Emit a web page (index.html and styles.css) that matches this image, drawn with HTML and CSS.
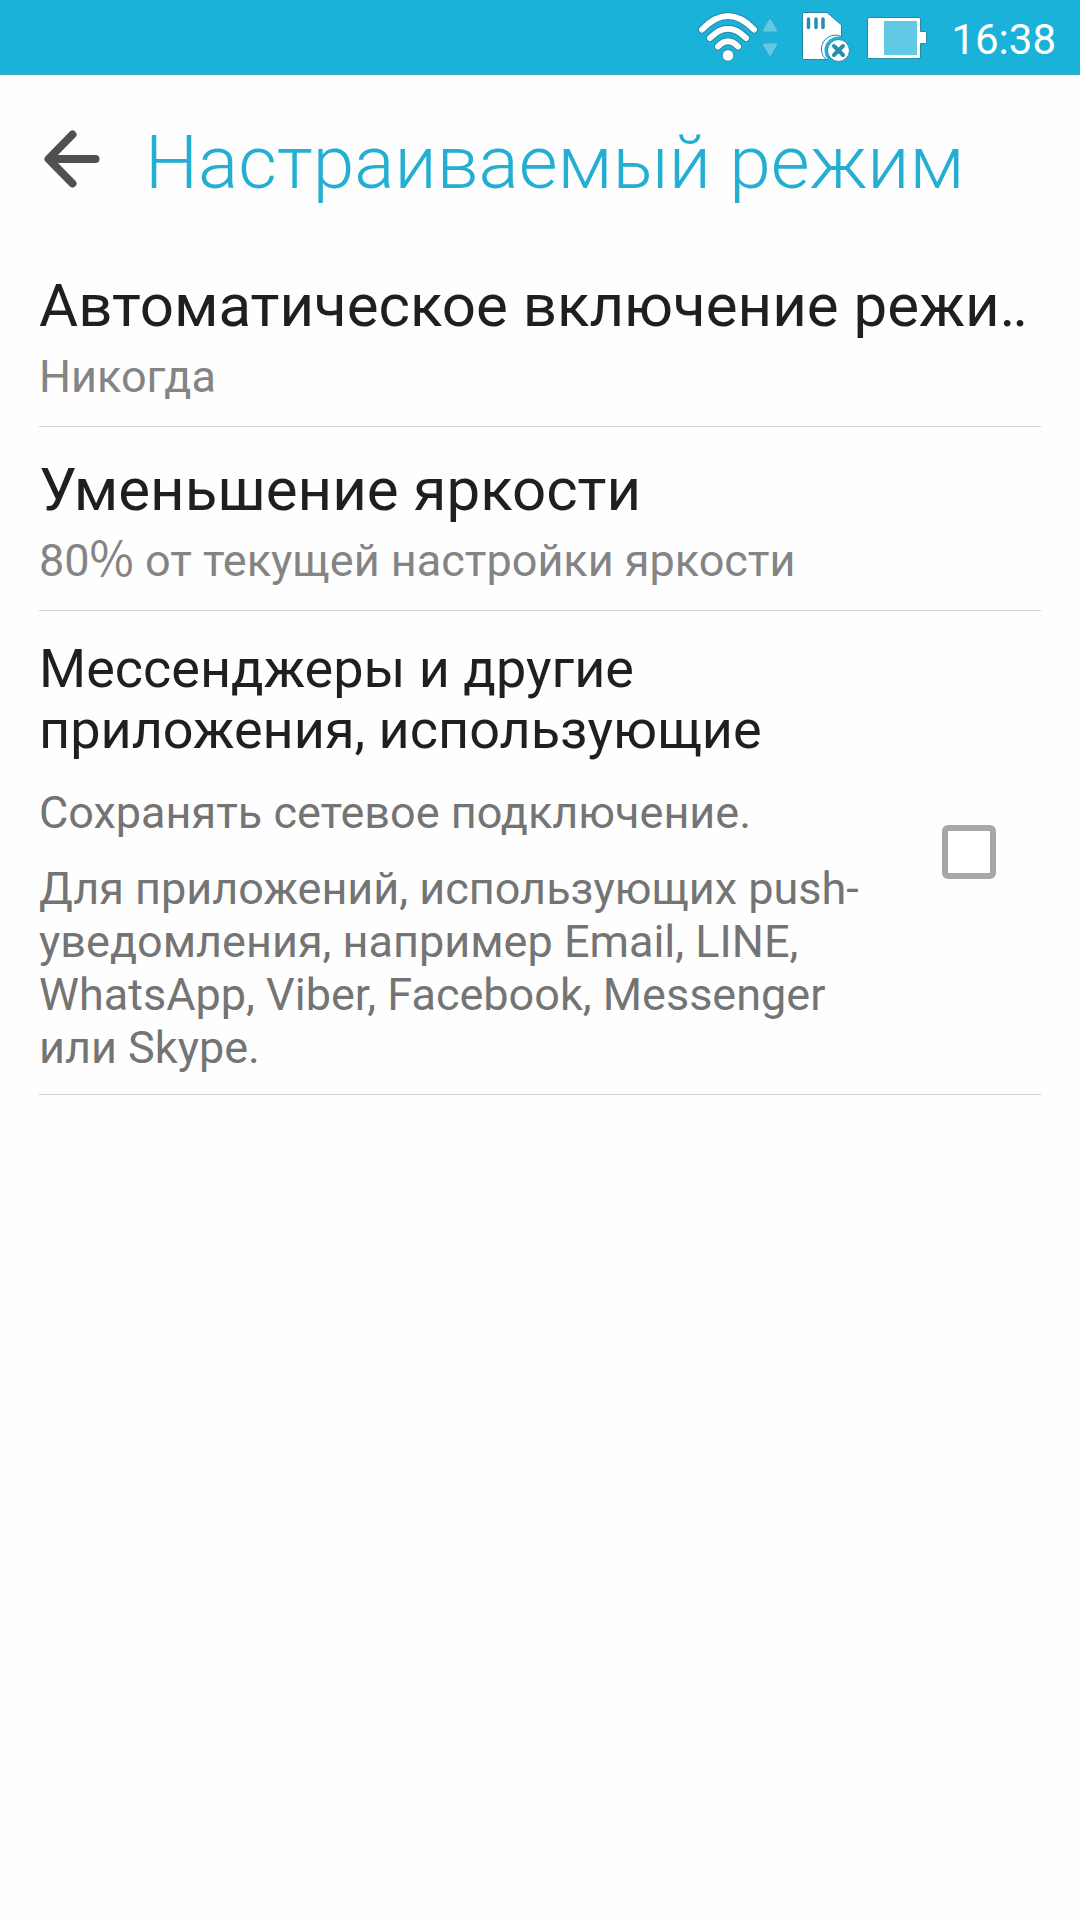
FILE: index.html
```html
<!DOCTYPE html>
<html lang="ru">
<head>
  <meta charset="utf-8">
  <meta name="viewport" content="width=device-width, initial-scale=1">
  <title>Настраиваемый режим</title>
  <link rel="stylesheet" href="styles.css">
</head>
<body>
  <div class="status-bar">
    <div class="network">
      <svg class="status-icon" width="60" height="52" viewBox="0 0 60 52" role="img" aria-label="Wi-Fi">
        <g fill="none" stroke-linecap="round">
          <g stroke="#2789a3" stroke-width="8">
            <path d="M4 18.500Q30-8.500 56 18.500"/>
            <path d="M12 27Q30 8.500 48 27"/>
            <path d="M20 35.500Q30 25 40 35.500"/>
          </g>
          <g stroke="#fff" stroke-width="6">
            <path d="M4 18.500Q30-8.500 56 18.500"/>
            <path d="M12 27Q30 8.500 48 27"/>
            <path d="M20 35.500Q30 25 40 35.500"/>
          </g>
        </g>
        <circle cx="30" cy="44.500" r="5.800" fill="#fff" stroke="#2789a3"/>
      </svg>
      <svg class="status-icon" width="18" height="52" viewBox="0 0 18 52" aria-hidden="true">
        <path d="M8 8Q9 6.500 10 8L16.500 19Q17 21 15 21H3Q1 21 1.500 19ZM8 45Q9 46.500 10 45L16.500 34Q17 32 15 32H3Q1 32 1.500 34Z" fill="#61c9e4" stroke="#38a5c2"/>
      </svg>
    </div>
    <svg class="status-icon" width="50" height="52" viewBox="0 0 50 52" role="img" aria-label="Карта памяти">
      <path d="M3 1.500H26L40.500 14V48.500H3Q1.500 48.500 1.500 47V3Q1.500 1.500 3 1.500Z" fill="#fff" stroke="#2789a3"/>
      <path d="M7.500 8V16.500M15 8V16.500M22 8V16.500" stroke="#278fae" stroke-width="3.500" stroke-linecap="round"/>
      <circle cx="37.500" cy="39.500" r="14" fill="#1bb2da"/>
      <path d="M25 48.500A14 14 0 0 1 40.500 25.500" fill="none" stroke="#2789a3"/>
      <circle cx="37.500" cy="39.500" r="11" fill="#fff" stroke="#2789a3"/>
      <path d="M33 35L42 44M42 35L33 44" stroke="#278fae" stroke-width="4" stroke-linecap="round"/>
    </svg>
    <svg class="status-icon" width="62" height="52" viewBox="0 0 62 52" role="img" aria-label="Батарея">
      <path d="M3 6.500H53Q54.500 6.500 54.500 8V20.500H59.500Q60.500 20.500 60.500 21.500V31.500Q60.500 32.500 59.500 32.500H54.500V46Q54.500 47.500 53 47.500H3Q1.500 47.500 1.500 46V8Q1.500 6.500 3 6.500Z" fill="#fff" stroke="#2789a3"/>
      <path d="M18 10H51V44H18Z" fill="#61c9e4"/>
    </svg>
    <time class="clock">16:38</time>
  </div>

  <header class="header">
    <button class="back" type="button" aria-label="Назад">
      <svg width="58" height="72" viewBox="0 0 58 72" aria-hidden="true">
        <path d="M52.500 33H6M29.500 8.500L5.500 33L29.500 57.500" fill="none" stroke="#505050" stroke-width="8" stroke-linecap="round" stroke-linejoin="round"/>
      </svg>
    </button>
    <h1 class="title">Настраиваемый режим</h1>
  </header>

  <main class="settings">
    <button class="item" type="button">
      <span class="item-title">Автоматическое включение режи‥</span>
      <span class="item-value">Никогда</span>
    </button>
    <button class="item" type="button">
      <span class="item-title">Уменьшение яркости</span>
      <span class="item-value">80<span class="percent">%</span> от текущей настройки яркости</span>
    </button>
    <label class="item-check" for="messengers">
      <span class="item-text">
        <span class="check-title">Мессенджеры и другие приложения, использующие</span>
        <span class="check-summary">Сохранять сетевое подключение.</span>
        <span class="check-details">Для приложений, использующих push-уведомления, например Email, LINE, WhatsApp, Viber, Facebook, Messenger или Skype.</span>
      </span>
      <input class="checkbox" type="checkbox" id="messengers">
    </label>
  </main>
</body>
</html>
```
FILE: styles.css
```css
* {
  box-sizing: border-box;
}

body {
  margin: 0;
  min-height: 100vh;
  background: #fefefe;
  color: #1f1f1f;
  font-family: Roboto, "Noto Sans", sans-serif;
}

svg {
  display: block;
}

.status-bar {
  display: flex;
  align-items: center;
  justify-content: flex-end;
  height: 75px;
  padding-right: 24px;
  border-bottom: 1px solid #38a5c2;
  background: #1bb2da;
}

.network {
  display: flex;
  gap: 3px;
  margin-right: 22px;
}

.status-icon {
  flex: none;
}

.status-icon + .status-icon {
  margin-left: 15px;
}

.network .status-icon {
  margin-left: 0;
}

.clock {
  margin-left: 23px;
  padding-top: 6px;
  color: #fff;
  font-size: 42px;
  line-height: 48px;
}

.header {
  display: flex;
  align-items: center;
  gap: 44px;
  padding: 42px 39px 36px 43px;
}

.back {
  flex: none;
  padding: 0;
  border: 0;
  background: none;
}

.title {
  margin: 0;
  color: #24afd2;
  font-size: 75px;
  font-weight: 300;
  line-height: 90px;
}

.settings {
  padding: 0 39px;
}

.item {
  display: flex;
  flex-direction: column;
  gap: 8px;
  width: 100%;
  padding: 27px 0 23px;
  border: 0;
  border-bottom: 1px solid #cfcfcf;
  background: none;
  color: inherit;
  font-family: inherit;
  text-align: left;
}

.item-title {
  font-size: 60px;
  line-height: 72px;
  white-space: nowrap;
}

.item-value {
  color: #848484;
  font-size: 45px;
  line-height: 53px;
}

.percent {
  font-family: "Noto Sans CJK SC", sans-serif;
  font-size: 48px;
  line-height: 0;
}

.item-check {
  display: flex;
  align-items: center;
  justify-content: space-between;
  gap: 64px;
  padding: 27px 45px 20px 0;
  border-bottom: 1px solid #cfcfcf;
}

.item-text {
  display: flex;
  flex: 1;
  flex-direction: column;
}

.check-title {
  font-size: 54px;
  line-height: 61px;
}

.check-summary {
  margin: 26px 0 23px;
  color: #747474;
  font-size: 45px;
  line-height: 53px;
}

.check-details {
  color: #747474;
  font-size: 45px;
  line-height: 53px;
}

.checkbox {
  flex: none;
  width: 54px;
  height: 54px;
  margin: 0 0 8px;
  border: 6px solid #a7a7a7;
  border-radius: 6px;
  background: #fff;
  appearance: none;
}

.checkbox:checked {
  background: #24afd2;
}
```
